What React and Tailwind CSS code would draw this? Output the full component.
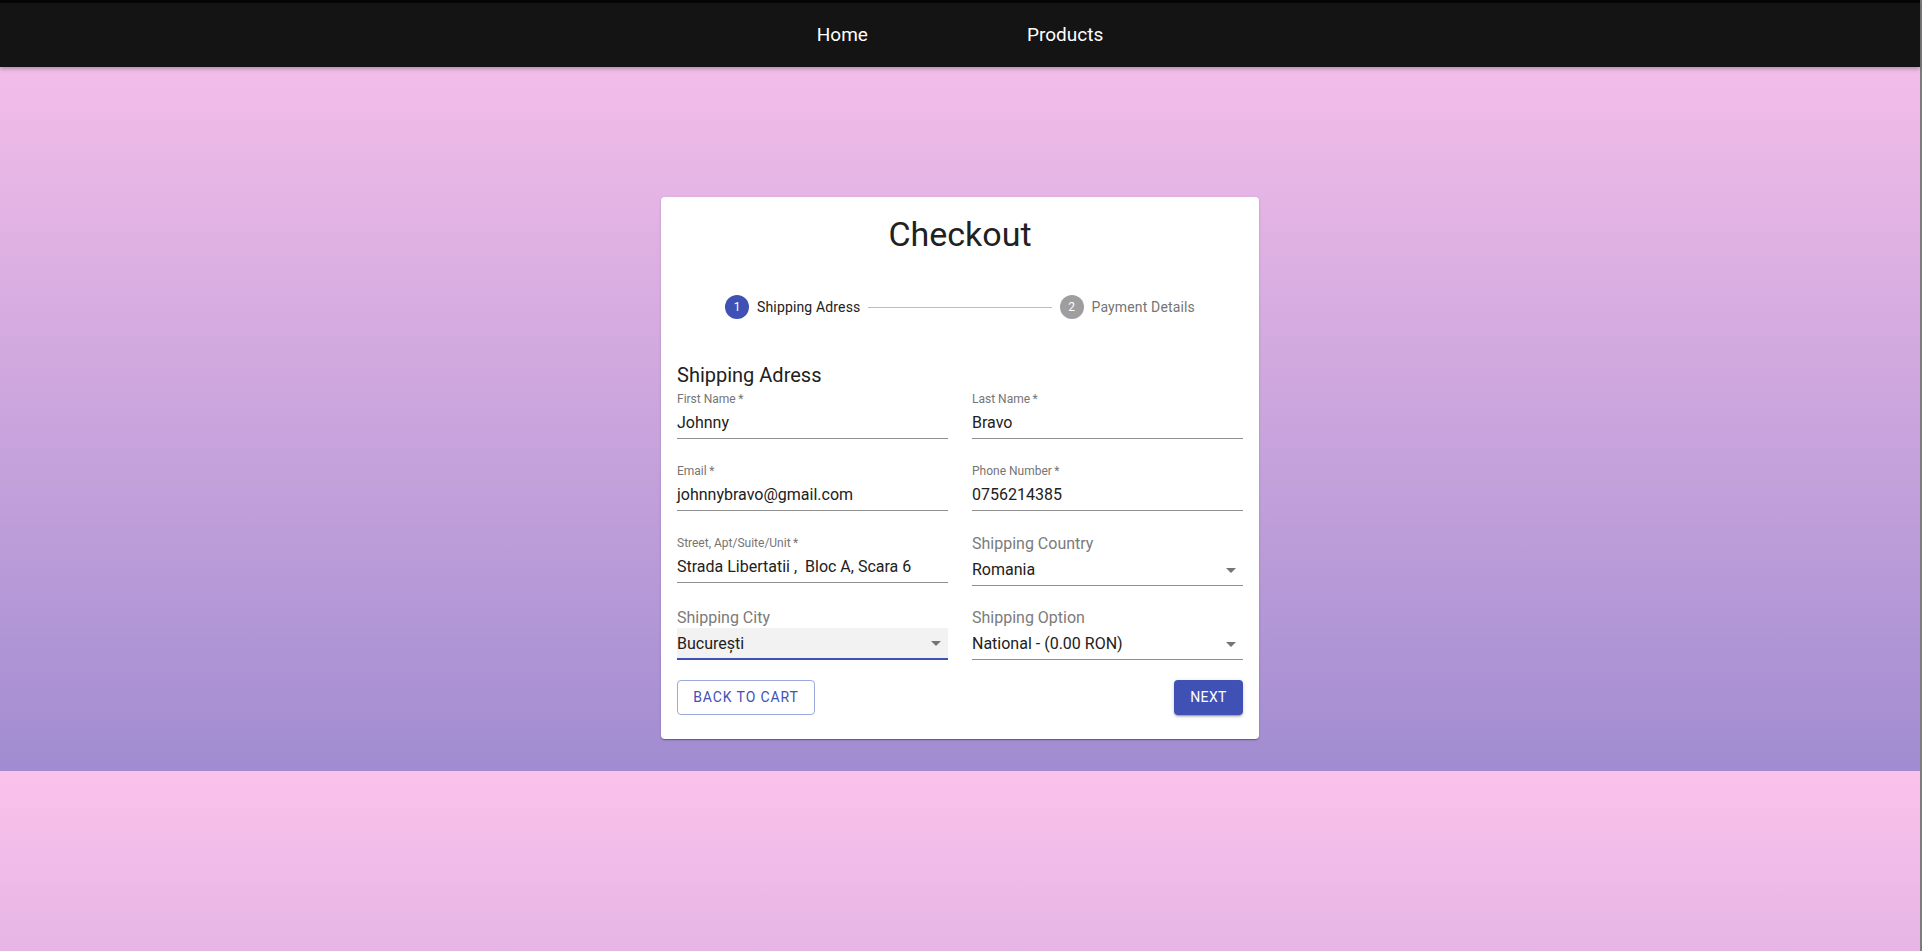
import React from 'react'

const font = { fontFamily: 'Roboto, "Liberation Sans", Arial, sans-serif' }

function ArrowDown() {
  return (
    <svg width="24" height="24" viewBox="0 0 24 24" className="flex-none fill-[#757575]">
      <path d="M7 10l5 5 5-5z" />
    </svg>
  )
}

function TextField({ label, value }) {
  return (
    <div>
      <div className="h-4 pt-px text-[12px] leading-[14px] text-[#757575]">{label}&#8201;*</div>
      <div className="h-8 pt-1 border-b border-[#8f8f8f] text-[16px] leading-[23px] text-[#212121] whitespace-pre">
        {value}
      </div>
    </div>
  )
}

function SelectField({ label, value, focused, className }) {
  return (
    <div className={className}>
      <div className="h-[19px] text-[16px] leading-[18px] text-[#7b7b7b]">{label}</div>
      <div
        className={
          focused
            ? 'h-[32px] flex items-center justify-between border-b-2 border-[#3f51b5] bg-[#f2f2f2]'
            : 'h-[32px] flex items-center justify-between border-b border-[#8f8f8f]'
        }
      >
        <span className="text-[16px] leading-[23px] text-[#212121]">{value}</span>
        <ArrowDown />
      </div>
    </div>
  )
}

function Stepper() {
  return (
    <div className="mt-10 h-6 px-10 flex items-center">
      <div className="flex items-center px-2">
        <div className="w-6 h-6 rounded-full bg-[#3f51b5] text-white text-[12px] flex items-center justify-center">1</div>
        <span className="pl-2 text-[14px] tracking-[0.15px] text-[#212121]">Shipping Adress</span>
      </div>
      <div className="flex-1 border-t border-[#bdbdbd]" />
      <div className="flex items-center px-2">
        <div className="w-6 h-6 rounded-full bg-[#9e9e9e] text-white text-[12px] flex items-center justify-center">2</div>
        <span className="pl-2 text-[14px] tracking-[0.15px] text-[#757575]">Payment Details</span>
      </div>
    </div>
  )
}

export default function App() {
  return (
    <div className="flex w-[1922px]" style={font}>
      <div className="w-[1920px]">
        <section className="h-[771px] bg-[linear-gradient(to_top,#a18cd1_0%,#fbc2eb_100%)]">
          <nav className="relative z-10 h-[67px] border-t-[3px] border-[#050505] bg-[#141414] shadow-[0_2px_4px_rgba(0,0,0,0.25)] flex items-center justify-center gap-[159px] text-[19px] text-white">
            <span>Home</span>
            <span>Products</span>
          </nav>
          <div className="pt-[130px] flex justify-center">
            <div className="w-[598px] bg-white rounded px-4 pt-4 pb-6 shadow-[0_2px_1px_-1px_rgba(0,0,0,0.2),0_1px_1px_0_rgba(0,0,0,0.14),0_1px_3px_0_rgba(0,0,0,0.12)]">
              <h1 className="h-[42px] text-center text-[34px] leading-[42px] text-[#212121]">Checkout</h1>
              <Stepper />
              <h2 className="mt-10 text-[20px] leading-[32px] text-[#212121]">Shipping Adress</h2>
              <div className="grid grid-cols-2 gap-x-6 gap-y-6 items-start">
                <TextField label="First Name" value="Johnny" />
                <TextField label="Last Name" value="Bravo" />
                <TextField label="Email" value="johnnybravo@gmail.com" />
                <TextField label="Phone Number" value="0756214385" />
                <TextField label="Street, Apt/Suite/Unit" value="Strada Libertatii ,  Bloc A, Scara 6" />
                <SelectField label="Shipping Country" value="Romania" />
                <SelectField label="Shipping City" value="București" focused className="-mt-px" />
                <SelectField label="Shipping Option" value="National - (0.00 RON)" className="-mt-px" />
              </div>
              <div className="mt-5 flex justify-between">
                <button className="w-[138px] h-[35px] rounded border border-[#9fa8da] text-[14px] tracking-[0.9px] text-[#3f51b5]">
                  BACK TO CART
                </button>
                <button className="w-[69px] h-[35px] rounded bg-[#3f51b5] text-[14px] tracking-[0.4px] text-white shadow-[0_3px_1px_-2px_rgba(0,0,0,0.2),0_2px_2px_0_rgba(0,0,0,0.14),0_1px_5px_0_rgba(0,0,0,0.12)]">
                  NEXT
                </button>
              </div>
            </div>
          </div>
        </section>
        <div className="h-[180px] bg-[linear-gradient(to_top,#a18cd1_0%,#fbc2eb_100%)] bg-[length:100%_771px] bg-no-repeat" />
      </div>
      <div className="w-[2px] bg-[#7d7d7d]" />
    </div>
  )
}
